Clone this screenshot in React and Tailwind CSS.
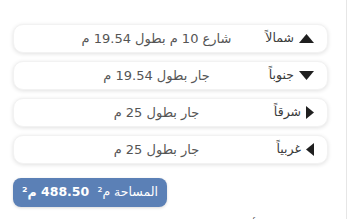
import React from "react";

const font = { fontFamily: '"DejaVu Sans", "Noto Sans", sans-serif' };

// مثلثات الاتجاهات
function Arrow({ dir }) {
  if (dir === "up")
    return (
      <svg width="15" height="9" viewBox="0 0 15 9">
        <path d="M7.5 0 L15 9 L0 9 Z" fill="#1f1f1f" />
      </svg>
    );
  if (dir === "down")
    return (
      <svg width="15" height="9" viewBox="0 0 15 9">
        <path d="M0 0 L15 0 L7.5 9 Z" fill="#1f1f1f" />
      </svg>
    );
  if (dir === "right")
    return (
      <svg width="8" height="13" viewBox="0 0 8 13">
        <path d="M0 0 L8 6.5 L0 13 Z" fill="#1f1f1f" />
      </svg>
    );
  return (
    <svg width="8" height="13" viewBox="0 0 8 13">
      <path d="M8 0 L0 6.5 L8 13 Z" fill="#1f1f1f" />
    </svg>
  );
}

const rows = [
  { dir: "up", label: "شمالاً", value: "شارع 10 م بطول 19.54 م" },
  { dir: "down", label: "جنوباً", value: "جار بطول 19.54 م" },
  { dir: "right", label: "شرقاً", value: "جار بطول 25 م" },
  { dir: "left", label: "غربياً", value: "جار بطول 25 م" },
];

export default function App() {
  return (
    <div dir="rtl" style={font} className="w-[347px] h-[219px] overflow-hidden bg-white border-r border-[#e6e6e6]">
      <div className="pt-6 pr-[18px] pl-[13px] flex flex-col gap-2">
        {rows.map((r) => (
          <div
            key={r.label}
            className="h-[29px] flex items-center rounded-[10px] bg-white pr-[13px] shadow-[0_1px_4px_rgba(0,0,0,0.12)] border border-[#f2f2f2]"
          >
            <div className="w-[53px] flex items-center gap-[5px] text-[12.5px] text-[#3b3b3b]">
              <Arrow dir={r.dir} />
              <span>{r.label}</span>
            </div>
            <div className="flex-1 text-center text-[13px] text-[#555] pl-[38px]">
              {r.value}
            </div>
          </div>
        ))}
        <div className="flex justify-end mt-[6px]">
          <div className="h-[29px] w-[154px] rounded-[8px] bg-[#5b80b6] text-white flex items-center justify-between px-[9px] text-[12.5px] shadow-[0_1px_3px_rgba(0,0,0,0.15)]">
            <span>المساحة م²</span>
            <span className="font-bold">488.50 م²</span>
          </div>
        </div>
        <div className="mt-[3px] pr-[4px] text-[13px] leading-[16px] text-[#333]">المعلومات الأخرى</div>
      </div>
    </div>
  );
}
